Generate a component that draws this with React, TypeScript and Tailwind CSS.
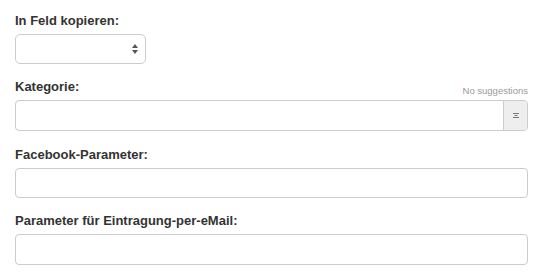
import React from 'react'

const labelCls = 'block h-5 text-[13px] font-bold leading-5 text-[#333]'
const inputCls = 'block h-[30px] w-full rounded-[4px] border border-[#ccc] bg-white'

export default function App() {
  return (
    <div className="h-[280px] w-[543px] overflow-hidden bg-white px-[15px] pt-[11px] font-['Liberation_Sans',Arial,sans-serif]">
      <div className="mb-[13px]">
        <label className={labelCls}>In Feld kopieren:</label>
        <div className="relative mt-[3px] h-[30px] w-[131px] rounded-[5px] border border-[#ccc] bg-white">
          <svg className="absolute right-[7px] top-[9px]" width="6" height="10" viewBox="0 0 6 10">
            <path d="M3 0 L6 4 L0 4 Z" fill="#555" />
            <path d="M0 6 L6 6 L3 10 Z" fill="#555" />
          </svg>
        </div>
      </div>

      <div className="mb-[14px]">
        <div className="flex items-end justify-between">
          <label className={labelCls}>Kategorie:</label>
          <span className="text-[9.5px] leading-[12px] text-[#999]">No suggestions</span>
        </div>
        <div className="mt-[3px] flex h-[31px] w-full overflow-hidden rounded-[4px] border border-[#ccc] bg-white">
          <div className="flex-1" />
          <div className="flex w-[24px] items-center justify-center border-l border-[#ccc] bg-[#eee]">
            <svg width="6" height="5" viewBox="0 0 6 5">
              <path d="M0 0.5 H6 M1.5 2.5 H4.5 M0 4.5 H6" stroke="#777" strokeWidth="1" />
            </svg>
          </div>
        </div>
      </div>

      <div className="mb-[13px]">
        <label className={labelCls}>Facebook-Parameter:</label>
        <input type="text" className={`mt-[3px] ${inputCls}`} />
      </div>

      <div>
        <label className={labelCls}>Parameter für Eintragung-per-eMail:</label>
        <input type="text" className={`mt-[3px] h-[31px] ${inputCls}`} />
      </div>
    </div>
  )
}
